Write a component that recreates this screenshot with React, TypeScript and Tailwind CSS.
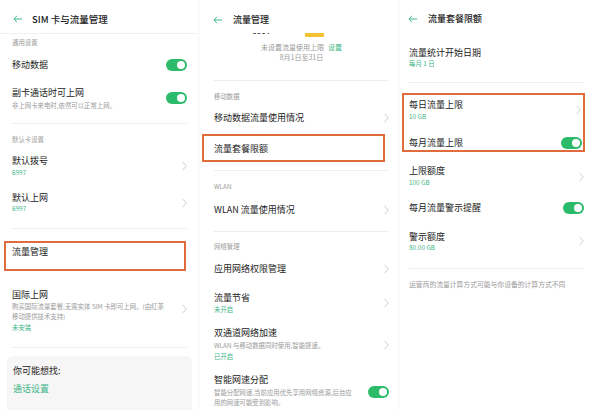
import React from "react";

const Arrow = () => (
  <svg width="9" height="8" viewBox="0 0 9 8" className="shrink-0">
    <polyline points="4,0.8 0.9,4 4,7.2" fill="none" stroke="#3db586" strokeWidth="1" />
    <line x1="1" y1="4" x2="9" y2="4" stroke="#3db586" strokeWidth="1" />
  </svg>
);

const Chevron = ({ className = "" }: { className?: string }) => (
  <svg width="5" height="10" viewBox="0 0 5 10" className={`shrink-0 ${className}`}>
    <polyline points="0.6,0.8 4.3,5 0.6,9.2" fill="none" stroke="#cdcdcd" strokeWidth="1" />
  </svg>
);

const Toggle = ({ className = "" }: { className?: string }) => (
  <div className={`w-[21px] h-[12px] rounded-full bg-[#2cbb6a] flex items-center justify-end pr-[2px] shrink-0 ${className}`}>
    <div className="w-[8px] h-[8px] rounded-full bg-white" />
  </div>
);

const Main = ({ children }: { children: React.ReactNode }) => (
  <div className="text-[9px] leading-[12px] text-[#222] whitespace-nowrap">{children}</div>
);
const Green = ({ children, className = "" }: { children: React.ReactNode; className?: string }) => (
  <div className={`text-[6.4px] leading-[10px] text-[#3db586] whitespace-nowrap ${className}`}>{children}</div>
);
const Gray = ({ children, className = "" }: { children: React.ReactNode; className?: string }) => (
  <div className={`text-[6.4px] leading-[10px] text-[#9a9a9a] whitespace-nowrap ${className}`}>{children}</div>
);
const Line = ({ className = "" }: { className?: string }) => (
  <div className={`h-px bg-[#eeeeee] shrink-0 ${className}`} />
);

function Panel1() {
  return (
    <div className="w-[198px] h-full flex flex-col bg-white overflow-hidden shrink-0">
      <div className="h-[34px] shrink-0 flex items-center pt-[4px] pl-[13px] border-b border-[#f1f1f1]">
        <Arrow />
        <span className="ml-[10px] text-[9.5px] leading-[12px] text-[#222] font-medium">SIM 卡与流量管理</span>
      </div>
      <div className="flex flex-col pl-[12px] pr-[11px]">
        <Gray className="mt-[4px]">通用设置</Gray>
        <div className="flex justify-between items-start mt-[11px]">
          <Main>移动数据</Main>
          <Toggle />
        </div>
        <div className="flex justify-between items-start mt-[16px]">
          <div>
            <Main>副卡通话时可上网</Main>
            <Gray className="mt-[2px]">非上网卡来电时,依然可以正常上网。</Gray>
          </div>
          <Toggle className="mt-[5px]" />
        </div>
        <Line className="mt-[12px]" />
        <Gray className="mt-[11px]">默认卡设置</Gray>
        <div className="flex justify-between items-start mt-[10px]">
          <div>
            <Main>默认拨号</Main>
            <Green className="mt-[1px]">6997</Green>
          </div>
          <Chevron className="mt-[6px]" />
        </div>
        <div className="flex justify-between items-start mt-[14px]">
          <div>
            <Main>默认上网</Main>
            <Green>6997</Green>
          </div>
          <Chevron className="mt-[6px]" />
        </div>
        <Line className="mt-[14px]" />
        <div className="-ml-[8px] mr-[1px] mt-[12px] h-[30px] border-2 border-[#e06c3c] pl-[6px] pt-[3px] shrink-0">
          <Main>流量管理</Main>
        </div>
        <div className="flex justify-between items-start mt-[18px]">
          <div>
            <Main>国际上网</Main>
            <Gray className="mt-[1px]">
              购买国际流量套餐,无需实体 SIM 卡即可上网。(由红茶
              <br />
              移动提供技术支持)
            </Gray>
            <Green className="mt-[1px]">未安装</Green>
          </div>
          <Chevron className="mt-[15px]" />
        </div>
        <Line className="mt-[14px]" />
        <div className="-ml-[5px] -mr-[5px] mt-[8px] h-[80px] rounded-t-[6px] bg-[#f6f6f6] pl-[6px] pt-[9px] shrink-0">
          <Main>你可能想找:</Main>
          <div className="mt-[6px] text-[9px] leading-[12px] text-[#3db586]">通话设置</div>
        </div>
      </div>
    </div>
  );
}

function Panel2() {
  return (
    <div className="w-[198px] h-full flex flex-col bg-white overflow-hidden shrink-0">
      <div className="h-[33px] shrink-0 flex items-center pt-[7px] pl-[13px]">
        <Arrow />
        <span className="ml-[11px] text-[9px] leading-[12px] text-[#222] font-medium">流量管理</span>
      </div>
      <div className="flex flex-col pl-[14px] pr-[9px]">
        <div className="h-[4px] overflow-hidden shrink-0">
          <div className="-mt-[8px] h-[12px] flex items-end pl-[38px]">
            <span className="text-[8px] leading-[12px] font-bold text-[#333]">6997</span>
            <span className="ml-[34px] w-[19px] h-[8px] bg-[#f2c230] rounded-[1px]" />
          </div>
        </div>
        <div className="mt-[5px] text-center text-[7px] leading-[10px] text-[#9a9a9a] whitespace-nowrap">
          未设置流量使用上限<span className="ml-[4px] text-[#3db586]">设置</span>
        </div>
        <div className="text-center text-[7px] leading-[10px] text-[#9a9a9a]">8月1日至31日</div>
        <Line className="mt-[18px]" />
        <Gray className="mt-[11px]">移动数据</Gray>
        <div className="flex justify-between items-start mt-[10px]">
          <Main>移动数据流量使用情况</Main>
          <Chevron className="mt-[1px]" />
        </div>
        <div className="-ml-[12px] mr-[4px] mt-[10px] h-[28px] border-2 border-[#e06c3c] pl-[10px] pt-[7px] shrink-0">
          <Main>流量套餐限额</Main>
        </div>
        <Line className="mt-[8px]" />
        <Gray className="mt-[11px]">WLAN</Gray>
        <div className="flex justify-between items-start mt-[12px]">
          <Main>WLAN 流量使用情况</Main>
          <Chevron className="mt-[1px]" />
        </div>
        <Line className="mt-[15px]" />
        <Gray className="mt-[10px]">网络管理</Gray>
        <div className="flex justify-between items-start mt-[11px]">
          <Main>应用网络权限管理</Main>
          <Chevron className="mt-[1px]" />
        </div>
        <div className="flex justify-between items-start mt-[17px]">
          <div>
            <Main>流量节省</Main>
            <Green className="mt-[1px]">未开启</Green>
          </div>
          <Chevron className="mt-[6px]" />
        </div>
        <div className="flex justify-between items-start mt-[12px]">
          <div>
            <Main>双通道网络加速</Main>
            <Gray className="mt-[2px]">WLAN 与移动数据同时使用,智能提速。</Gray>
            <Green className="mt-[1px]">已开启</Green>
          </div>
          <Chevron className="mt-[13px]" />
        </div>
        <div className="flex justify-between items-start mt-[12px]">
          <div>
            <Main>智能网速分配</Main>
            <Gray className="mt-[2px]">
              智能分配网速,当前应用优先享用网络资源,后台应
              <br />
              用的网速可能受到影响。
            </Gray>
          </div>
          <Toggle className="mt-[12px]" />
        </div>
      </div>
    </div>
  );
}

function Panel3() {
  return (
    <div className="w-[200px] h-full flex flex-col bg-white overflow-hidden shrink-0">
      <div className="h-[33px] shrink-0 flex items-center pt-[5px] pl-[8px]">
        <Arrow />
        <span className="ml-[11px] text-[9px] leading-[12px] text-[#222] font-medium">流量套餐限额</span>
      </div>
      <div className="flex flex-col pl-[9px] pr-[16px]">
        <div className="mt-[14px]">
          <Main>流量统计开始日期</Main>
          <Green>每月 1 日</Green>
        </div>
        <Line className="mt-[13px]" />
        <div className="-ml-[7px] -mr-[1px] mt-[10px] h-[59px] border-2 border-[#e06c3c] pl-[5px] pt-[4px] pr-[1px] shrink-0">
          <div className="flex justify-between items-start">
            <div>
              <Main>每日流量上限</Main>
              <Green className="mt-[1px]">10 GB</Green>
            </div>
            <Chevron className="mt-[6px] mr-[1px]" />
          </div>
          <div className="flex justify-between items-start mt-[15px]">
            <Main>每月流量上限</Main>
            <Toggle />
          </div>
        </div>
        <div className="flex justify-between items-start mt-[13px]">
          <div>
            <Main>上限额度</Main>
            <Green className="mt-[1px]">100 GB</Green>
          </div>
          <Chevron className="mt-[7px]" />
        </div>
        <div className="flex justify-between items-start mt-[14px]">
          <Main>每月流量警示提醒</Main>
          <Toggle />
        </div>
        <div className="flex justify-between items-start mt-[17px]">
          <div>
            <Main>警示额度</Main>
            <Green>80.00 GB</Green>
          </div>
          <Chevron className="mt-[5px]" />
        </div>
        <Line className="mt-[15px]" />
        <div className="mt-[10px] text-[6.8px] leading-[10px] text-[#9a9a9a] whitespace-nowrap">
          运营商的流量计算方式可能与你设备的计算方式不同
        </div>
      </div>
    </div>
  );
}

export default function App() {
  return (
    <div className="w-[600px] h-[410px] flex bg-white overflow-hidden font-['Noto_Sans_CJK_SC','Noto_Sans',sans-serif]">
      <Panel1 />
      <div className="w-[2px] shrink-0 bg-[#fafafa]" />
      <Panel2 />
      <div className="w-[2px] shrink-0 bg-[#fafafa]" />
      <Panel3 />
    </div>
  );
}
